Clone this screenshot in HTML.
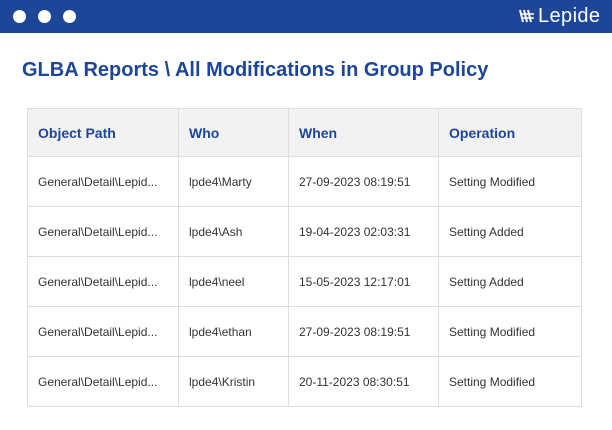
<!DOCTYPE html>
<html><head><style>
body{margin:0;width:612px;height:430px;background:#fff;font-family:"Liberation Sans",sans-serif;position:relative;overflow:hidden}
.bar{position:absolute;left:0;top:0;width:612px;height:33px;background:#1d4599}
.dot{position:absolute;top:10px;width:13px;height:13px;border-radius:50%;background:#fff}
.logo{position:absolute;left:538px;top:5px;color:#fff;font-size:20px;font-weight:300;letter-spacing:0.4px}
h1{position:absolute;left:22px;top:59px;margin:0;font-size:20px;font-weight:bold;color:#1d4599;letter-spacing:0}
table{position:absolute;left:27px;top:108px;border-collapse:collapse;width:555px}
td,th{border:1px solid #dedede;height:49px;padding:0 0 0 10px;text-align:left;font-size:12px;color:#333;vertical-align:middle}
th{background:#f2f2f2;color:#1d4599;font-size:14px;font-weight:bold;height:47px}
</style></head><body>
<div class="bar">
<div class="dot" style="left:13px"></div><div class="dot" style="left:38px"></div><div class="dot" style="left:63px"></div>
<svg style="position:absolute;left:519px;top:9px" width="16" height="14" viewBox="0 0 16 14"><g stroke="#fff" stroke-width="2"><path d="M1 1l3 12M5 1l3 12M9 1l3 12"/><path d="M2 5h13M3 9h12" stroke-width="1.5"/></g></svg>
<div class="logo">Lepide</div>
</div>
<h1>GLBA Reports \ All Modifications in Group Policy</h1>
<table>
<tr><th style="width:140px">Object Path</th><th style="width:99px">Who</th><th style="width:139px">When</th><th>Operation</th></tr>
<tr><td>General\Detail\Lepid...</td><td>lpde4\Marty</td><td>27-09-2023 08:19:51</td><td>Setting Modified</td></tr>
<tr><td>General\Detail\Lepid...</td><td>lpde4\Ash</td><td>19-04-2023 02:03:31</td><td>Setting Added</td></tr>
<tr><td>General\Detail\Lepid...</td><td>lpde4\neel</td><td>15-05-2023 12:17:01</td><td>Setting Added</td></tr>
<tr><td>General\Detail\Lepid...</td><td>lpde4\ethan</td><td>27-09-2023 08:19:51</td><td>Setting Modified</td></tr>
<tr><td>General\Detail\Lepid...</td><td>lpde4\Kristin</td><td>20-11-2023 08:30:51</td><td>Setting Modified</td></tr>
</table>
</body></html>
